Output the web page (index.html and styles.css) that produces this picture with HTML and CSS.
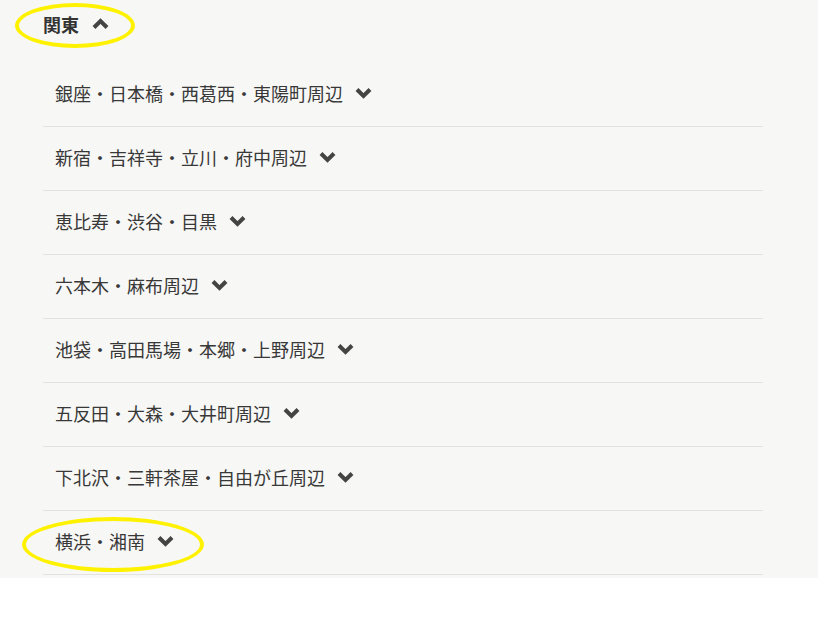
FILE: index.html
```html
<!DOCTYPE html>
<html lang="ja">
<head>
<meta charset="utf-8">
<title>関東</title>
<link rel="stylesheet" href="styles.css">
</head>
<body>
<div class="panel">
  <div class="region">
    <span class="region-name">関東</span>
    <svg class="chev" width="17" height="12" viewBox="0 0 17 12"><polyline points="2,9.5 8.5,3 15,9.5" fill="none" stroke="#444" stroke-width="4"/></svg>
    <span class="mark mark-head"></span>
  </div>
  <ul class="areas">
    <li class="area"><span>銀座・日本橋・西葛西・東陽町周辺</span><svg class="chev" width="17" height="12" viewBox="0 0 17 12"><polyline points="2,2.5 8.5,9 15,2.5" fill="none" stroke="#444" stroke-width="4"/></svg></li>
    <li class="area"><span>新宿・吉祥寺・立川・府中周辺</span><svg class="chev" width="17" height="12" viewBox="0 0 17 12"><polyline points="2,2.5 8.5,9 15,2.5" fill="none" stroke="#444" stroke-width="4"/></svg></li>
    <li class="area"><span>恵比寿・渋谷・目黒</span><svg class="chev" width="17" height="12" viewBox="0 0 17 12"><polyline points="2,2.5 8.5,9 15,2.5" fill="none" stroke="#444" stroke-width="4"/></svg></li>
    <li class="area"><span>六本木・麻布周辺</span><svg class="chev" width="17" height="12" viewBox="0 0 17 12"><polyline points="2,2.5 8.5,9 15,2.5" fill="none" stroke="#444" stroke-width="4"/></svg></li>
    <li class="area"><span>池袋・高田馬場・本郷・上野周辺</span><svg class="chev" width="17" height="12" viewBox="0 0 17 12"><polyline points="2,2.5 8.5,9 15,2.5" fill="none" stroke="#444" stroke-width="4"/></svg></li>
    <li class="area"><span>五反田・大森・大井町周辺</span><svg class="chev" width="17" height="12" viewBox="0 0 17 12"><polyline points="2,2.5 8.5,9 15,2.5" fill="none" stroke="#444" stroke-width="4"/></svg></li>
    <li class="area"><span>下北沢・三軒茶屋・自由が丘周辺</span><svg class="chev" width="17" height="12" viewBox="0 0 17 12"><polyline points="2,2.5 8.5,9 15,2.5" fill="none" stroke="#444" stroke-width="4"/></svg></li>
    <li class="area area-last"><span>横浜・湘南</span><svg class="chev" width="17" height="12" viewBox="0 0 17 12"><polyline points="2,2.5 8.5,9 15,2.5" fill="none" stroke="#444" stroke-width="4"/></svg><span class="mark mark-last"></span></li>
  </ul>
</div>
</body>
</html>
```
FILE: styles.css
```css
html, body {
  margin: 0;
  padding: 0;
  background: #ffffff;
}
body {
  font-family: "Noto Sans CJK JP", "Noto Sans", sans-serif;
  color: #333333;
}
.panel {
  background: #f7f7f5;
  padding: 0 55px 3px 43px;
}
.region {
  position: relative;
  height: 48px;
  padding-bottom: 3px;
  display: flex;
  align-items: center;
  gap: 13px;
  font-size: 18px;
  font-weight: bold;
  color: #333;
}
.region-name {
  line-height: 1;
}
.chev {
  display: block;
  flex: none;
}
.areas {
  list-style: none;
  margin: 12px 0 0 0;
  padding: 0;
}
.area {
  position: relative;
  height: 60px;
  padding-bottom: 3px;
  border-bottom: 1px solid #e2e2e0;
  display: flex;
  align-items: center;
  gap: 12px;
  padding-left: 12px;
  font-size: 18px;
  font-weight: 400;
  color: #383838;
}
.area span {
  line-height: 1;
}
.mark {
  position: absolute;
  border: 4px solid #fff200;
  border-radius: 50%;
  box-sizing: border-box;
  pointer-events: none;
}
.mark-head {
  left: -28px;
  top: 3px;
  width: 120px;
  height: 45px;
}
.mark-last {
  left: -21px;
  top: 6px;
  width: 182px;
  height: 55px;
}
```
